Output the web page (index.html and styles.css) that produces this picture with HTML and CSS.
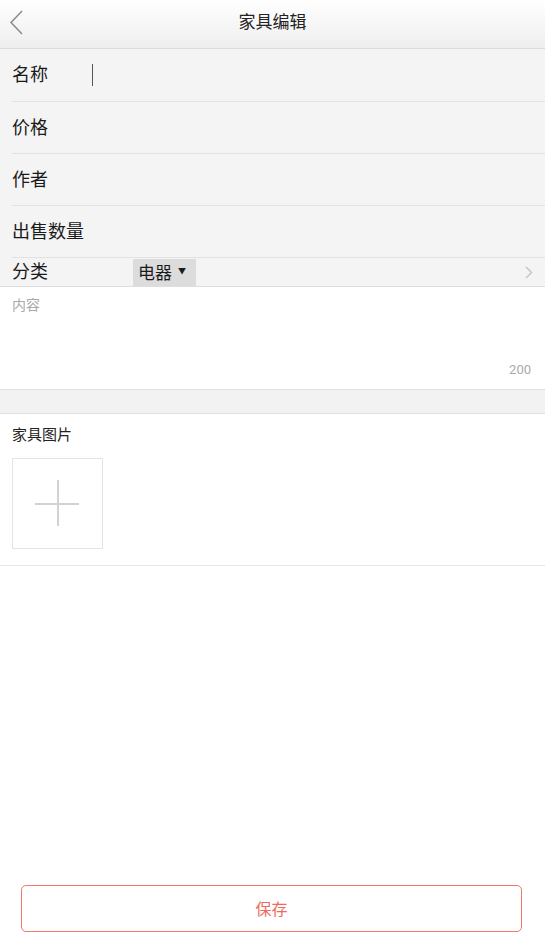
FILE: index.html
```html
<!DOCTYPE html>
<html lang="zh">
<head>
<meta charset="utf-8">
<title>家具编辑</title>
<link rel="stylesheet" href="styles.css">
</head>
<body>
<div class="page">
  <header class="topbar">
    <svg class="back" width="16" height="26" viewBox="0 0 16 26"><path d="M13 1 L2 12.5 L13 24" fill="none" stroke="#8a8a8a" stroke-width="1.5"/></svg>
    <h1 class="title">家具编辑</h1>
  </header>

  <section class="fields">
    <div class="row row-first"><span class="label">名称</span><span class="cursor"></span></div>
    <div class="row"><span class="label">价格</span></div>
    <div class="row"><span class="label">作者</span></div>
    <div class="row"><span class="label">出售数量</span></div>
    <div class="row row-cat">
      <span class="label">分类</span>
      <span class="select">电器 <span class="caret">▼</span></span>
      <svg class="chev" width="8" height="13" viewBox="0 0 8 13"><path d="M1 1 L6.5 6.5 L1 12" fill="none" stroke="#c8c8c8" stroke-width="1.6"/></svg>
    </div>
  </section>

  <section class="content">
    <div class="placeholder">内容</div>
    <div class="count">200</div>
  </section>

  <div class="gap"></div>

  <section class="pics">
    <div class="pics-title">家具图片</div>
    <div class="upload">
      <span class="plus-h"></span>
      <span class="plus-v"></span>
    </div>
  </section>

  <footer class="footer">
    <button class="save">保存</button>
  </footer>
</div>
</body>
</html>
```
FILE: styles.css
```css
* { box-sizing: border-box; }
html, body { margin: 0; padding: 0; background: #fff; }
body {
  font-family: "Noto Sans CJK SC", "Noto Sans", sans-serif;
  color: #1a1a1a;
}
.page {
  min-height: 943px;
  display: flex;
  flex-direction: column;
}
.topbar {
  height: 49px;
  border-bottom: 1px solid #dcdcdc;
  background: linear-gradient(#ffffff, #eeeeee);
  display: flex;
  align-items: center;
  justify-content: center;
  position: relative;
}
.back {
  position: absolute;
  left: 9px;
  top: 10px;
}
.title {
  margin: 0;
  font-size: 17px;
  font-weight: normal;
  color: #222;
  line-height: 1;
  margin-top: -8px;
}
.fields {
  background: #f4f4f4;
  display: flex;
  flex-direction: column;
  border-bottom: 1px solid #dedede;
}
.row {
  height: 52px;
  margin-left: 12px;
  border-bottom: 1px solid #e2e2e2;
  display: flex;
  align-items: center;
  padding-bottom: 4px;
}
.row-first { height: 53px; }
.label {
  font-size: 18px;
  color: #1a1a1a;
  line-height: 1;
}
.cursor {
  width: 1px;
  height: 22px;
  background: #555;
  margin-left: 44px;
  margin-top: 3px;
}
.row-cat {
  height: 28px;
  border-bottom: none;
  padding-bottom: 0;
  position: relative;
}
.row-cat .label { width: 121px; margin-top: -4px; }
.select {
  height: 27px;
  width: 63px;
  background: #dcdcdc;
  display: flex;
  align-items: center;
  padding-left: 5px;
  padding-bottom: 3px;
  font-size: 17px;
  color: #1a1a1a;
  align-self: flex-end;
}
.caret {
  font-size: 8px;
  margin-left: 6px;
  margin-top: -2px;
}
.chev {
  margin-left: auto;
  margin-right: 12px;
}
.content {
  background: #fff;
  height: 103px;
  border-bottom: 1px solid #e0e0e0;
  padding: 8px 14px 0 12px;
  display: flex;
  flex-direction: column;
}
.placeholder {
  font-size: 14px;
  color: #a9a9a9;
  line-height: 18px;
}
.count {
  margin-top: auto;
  margin-bottom: 12px;
  align-self: flex-end;
  font-size: 13px;
  color: #aaa;
  font-family: "Roboto", "Noto Sans", sans-serif;
}
.gap {
  height: 24px;
  background: #f2f2f2;
  border-bottom: 1px solid #e0e0e0;
}
.pics {
  background: #fff;
  padding: 10px 12px 16px 12px;
  border-bottom: 1px solid #e6e6e6;
}
.pics-title {
  font-size: 15px;
  color: #222;
  line-height: 20px;
  margin-bottom: 14px;
}
.upload {
  width: 91px;
  height: 91px;
  border: 1px solid #e4e4e4;
  position: relative;
}
.plus-h {
  position: absolute;
  left: 22px;
  top: 44px;
  width: 44px;
  height: 2px;
  background: #d2d2d2;
}
.plus-v {
  position: absolute;
  left: 44px;
  top: 21px;
  width: 2px;
  height: 46px;
  background: #d2d2d2;
}
.footer {
  margin-top: auto;
  padding: 0 23px 11px 21px;
}
.save {
  width: 100%;
  height: 47px;
  border: 1.5px solid #f2766b;
  border-radius: 5px;
  background: #fff;
  color: #ee6a5c;
  font-size: 16px;
  font-family: "Noto Sans CJK SC", "Noto Sans", sans-serif;
  padding-bottom: 2px;
}
```
